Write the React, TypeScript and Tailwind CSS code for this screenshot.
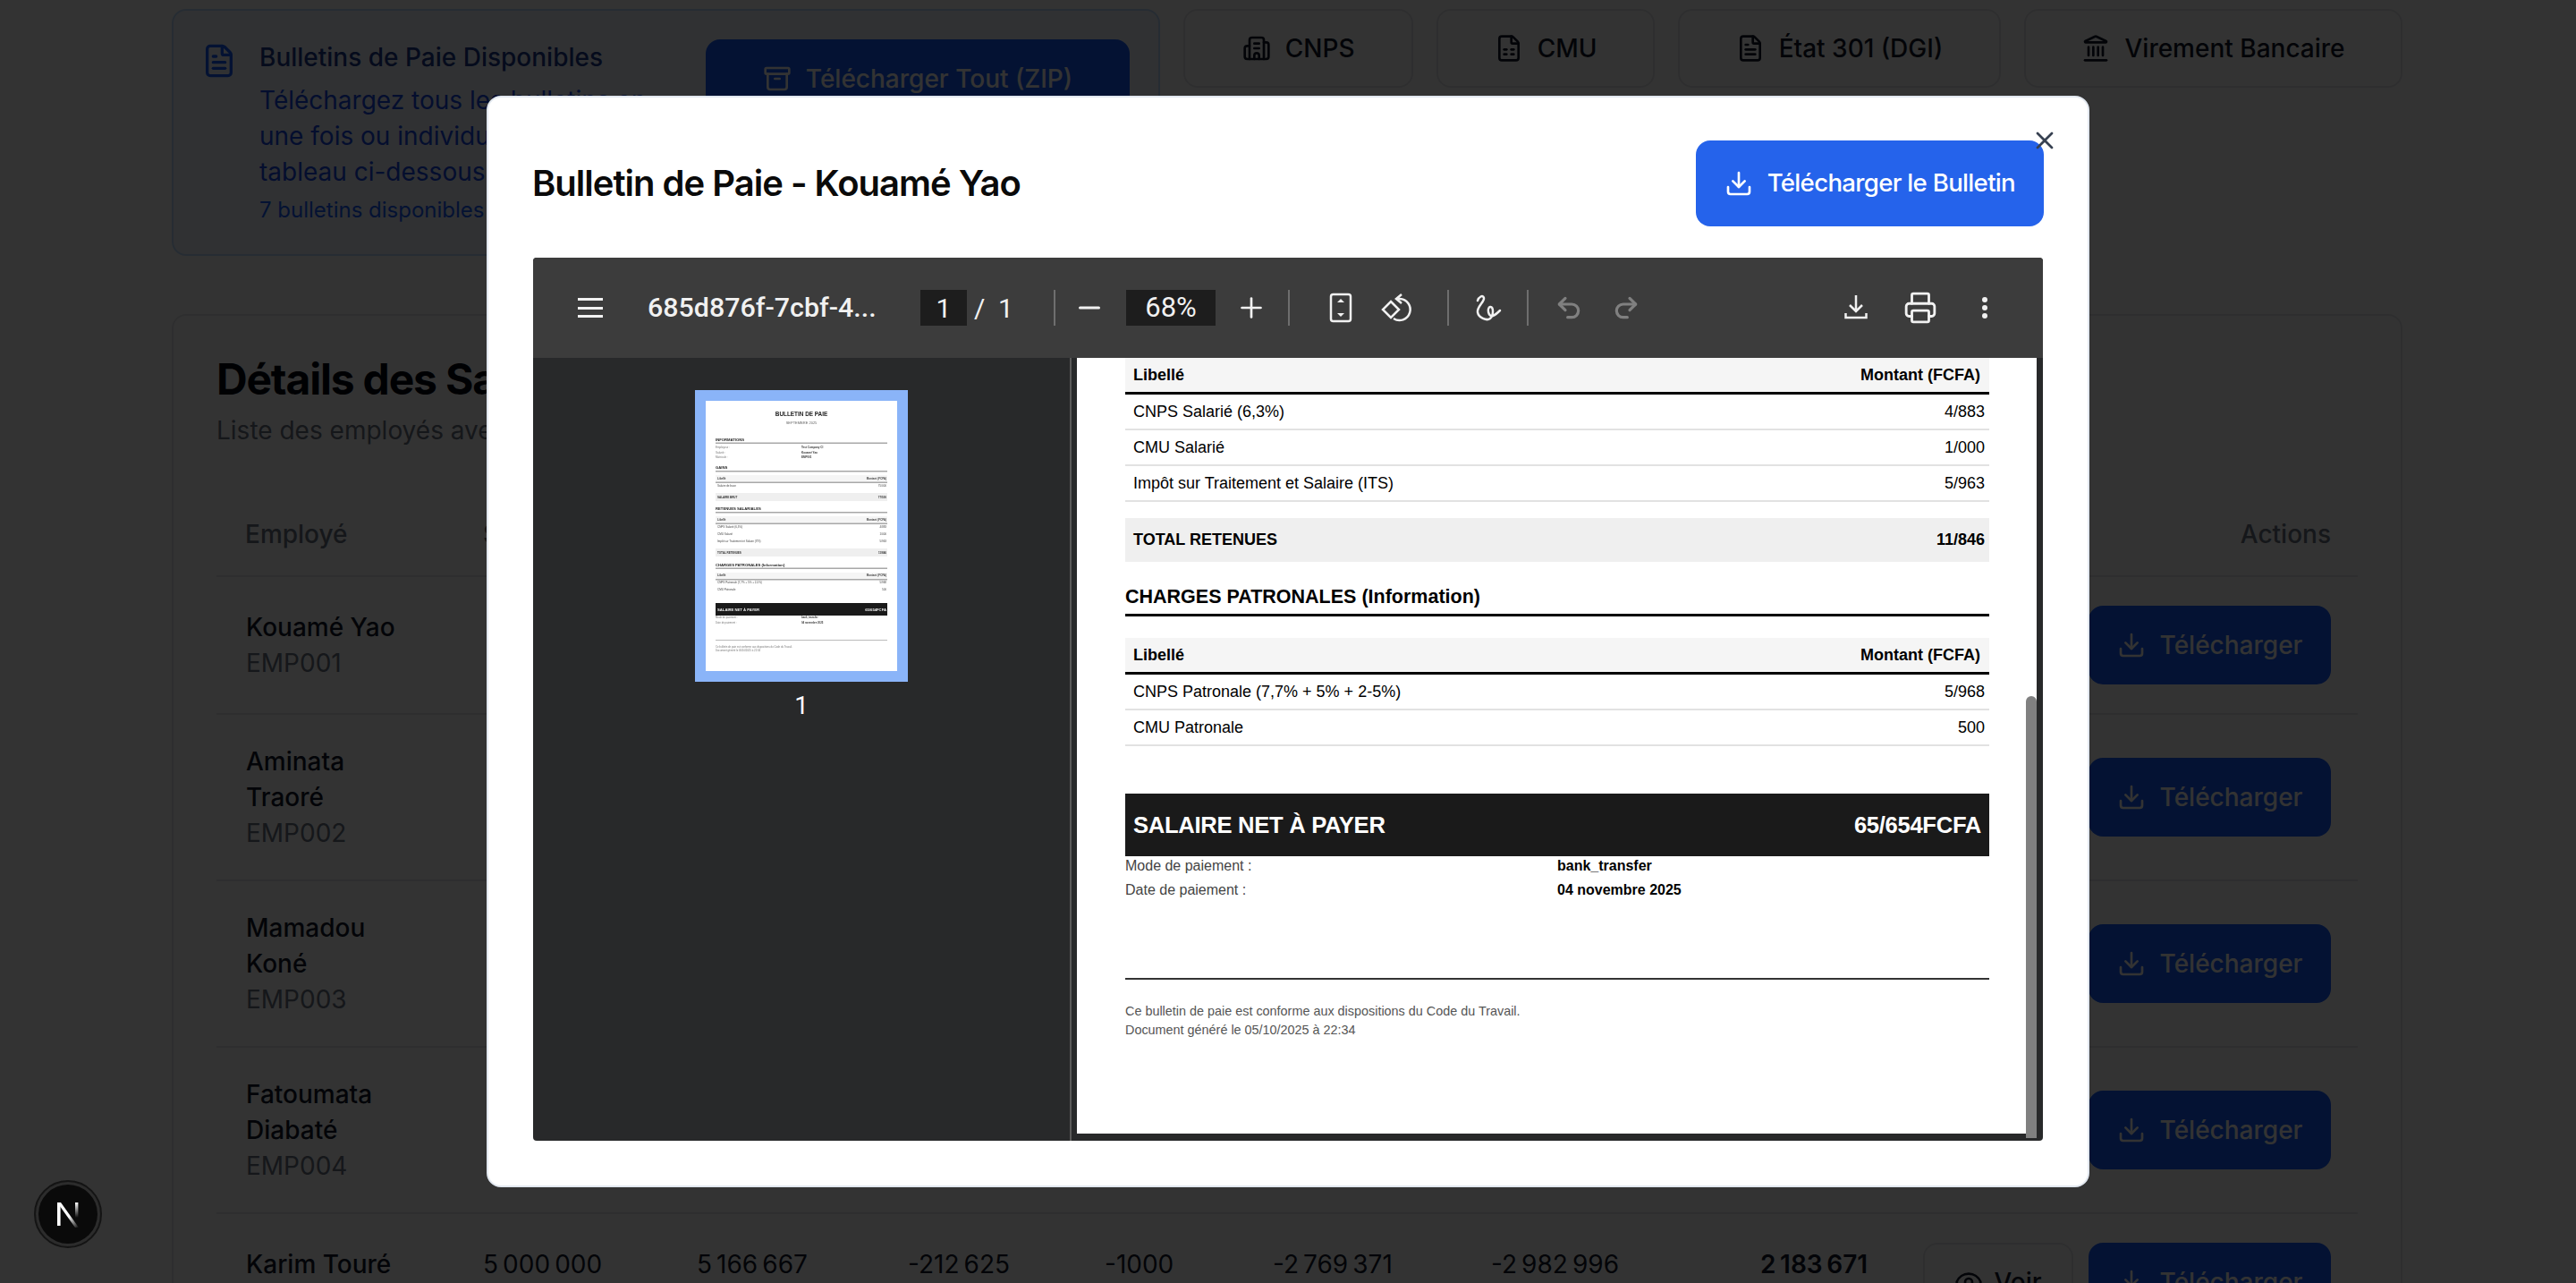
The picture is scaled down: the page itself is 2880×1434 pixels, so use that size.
import React from 'react';
import { Archive, Building2, Download, Eye, FileSpreadsheet, FileText, Landmark, Plus, Minus, Printer, Redo2, Undo2, X } from 'lucide-react';

interface Employee {
  name: string[];
  id: string;
  values: string[];
}

const employees: Employee[] = [
  { name: ['Kouamé Yao'], id: 'EMP001', values: [] },
  { name: ['Aminata', 'Traoré'], id: 'EMP002', values: [] },
  { name: ['Mamadou', 'Koné'], id: 'EMP003', values: [] },
  { name: ['Fatoumata', 'Diabaté'], id: 'EMP004', values: [] },
  { name: ['Karim Touré'], id: 'EMP005', values: ['5\u202f000\u202f000', '5\u202f166\u202f667', '-212\u202f625', '-1000', '-2\u202f769\u202f371', '-2\u202f982\u202f996', '2\u202f183\u202f671'] },
];

const valueCols = ['w-[239px]', 'w-[236px]', 'w-[220px]', 'w-[188px]', 'w-[244px]', 'w-[301px]', 'w-[182px] font-semibold'];

const TopButton = ({ icon, label, className }: { icon: React.ReactNode; label: string; className: string }) => (
  <div className={`flex h-[88px] items-center justify-center gap-[16px] rounded-2xl border-2 border-gray-200 bg-white text-[28px] font-medium text-gray-900 ${className}`}>
    {icon}
    <span>{label}</span>
  </div>
);

const DownloadButton = () => (
  <div className="flex h-[88px] w-[271px] shrink-0 items-center justify-center gap-[16px] rounded-2xl bg-blue-600 text-[28px] font-medium text-white">
    <Download size={32} />
    <span>Télécharger</span>
  </div>
);

const PayRow = ({ label, value, head, shaded }: { label: string; value: string; head?: boolean; shaded?: boolean }) => {
  if (shaded) {
    return (
      <div className="flex h-[49px] items-center justify-between bg-[#efefef] pl-[9px] pr-[5px] text-[18px] font-bold text-black">
        <span>{label}</span>
        <span>{value}</span>
      </div>
    );
  }
  if (head) {
    return (
      <div className="flex h-[41px] items-center justify-between border-b-[3px] border-black bg-[#f5f5f5] pl-[9px] pr-[10px] text-[18px] font-bold text-black">
        <span>{label}</span>
        <span>{value}</span>
      </div>
    );
  }
  return (
    <div className="flex h-[40px] items-center justify-between border-b-2 border-[#e2e2e2] pl-[9px] pr-[5px] text-[18px] text-black">
      <span>{label}</span>
      <span>{value}</span>
    </div>
  );
};

// small preview of the payslip, drawn with real text
const Thumbnail = () => {
  const rows: [number, string, string][] = [
    [87, 'Libellé', 'Montant (FCFA)'],
    [95, 'Salaire de base', '75/000'],
    [133, 'Libellé', 'Montant (FCFA)'],
    [141, 'CNPS Salarié (6,3%)', '4/883'],
    [149, 'CMU Salarié', '1/000'],
    [157, 'Impôt sur Traitement et Salaire (ITS)', '5/963'],
    [195, 'Libellé', 'Montant (FCFA)'],
    [203, 'CNPS Patronale (7,7% + 5% + 2-5%)', '5/968'],
    [211, 'CMU Patronale', '500'],
  ];
  const lines: [number, number][] = [[46.5, 1.5], [78, 1.5], [90.5, 1.5], [124, 1.5], [136.5, 1.5], [186.5, 1.5], [199, 1.5]];
  const bands: [number, number, string][] = [
    [83, 8, '#f5f5f5'],
    [103, 9, '#efefef'],
    [129, 8, '#f5f5f5'],
    [165, 9, '#efefef'],
    [192, 7, '#f5f5f5'],
    [226, 14, '#1a1a1a'],
  ];
  return (
    <svg viewBox="0 0 214 302" className="block h-[302px] w-[214px] bg-white blur-[0.3px]" fontFamily="'Liberation Sans', Arial, sans-serif">
      {bands.map(([y, h, c]) => <rect key={y} x="11" y={y} width="192" height={h} fill={c} />)}
      {lines.map(([y, h]) => <rect key={y} x="11" y={y} width="192" height={h} fill="#a8a8a8" />)}
      <rect x="11" y="267" width="192" height="1" fill="#bbb" />
      <text x="107" y="17" fontSize="6.4" fontWeight="700" textAnchor="middle" fill="#222">BULLETIN DE PAIE</text>
      <text x="107" y="25.5" fontSize="4" textAnchor="middle" fill="#666">SEPTEMBRE 2025</text>
      <g fontSize="4.2" fontWeight="700" fill="#222">
        <text x="11" y="44.5">INFORMATIONS</text>
        <text x="11" y="75.5">GAINS</text>
        <text x="11" y="122">RETENUES SALARIALES</text>
        <text x="11" y="184.5">CHARGES PATRONALES (Information)</text>
      </g>
      <g fontSize="3" fill="#777">
        <text x="11" y="53">Employeur :</text>
        <text x="11" y="58.5">Salarié :</text>
        <text x="11" y="64">Matricule :</text>
      </g>
      <g fontSize="3" fontWeight="700" fill="#333">
        <text x="107" y="53">Test Company CI</text>
        <text x="107" y="58.5">Kouamé Yao</text>
        <text x="107" y="64">EMP001</text>
      </g>
      <g fontSize="3" fill="#444">
        {rows.map(([y, a, b]) => (
          <g key={y} fontWeight={a === 'Libellé' ? 700 : 400}>
            <text x="13" y={y + 1}>{a}</text>
            <text x="202" y={y + 1} textAnchor="end">{b}</text>
          </g>
        ))}
      </g>
      <g fontSize="3" fontWeight="700" fill="#333">
        <text x="13" y="109">SALAIRE BRUT</text>
        <text x="202" y="109" textAnchor="end">77/500</text>
        <text x="13" y="171">TOTAL RETENUES</text>
        <text x="202" y="171" textAnchor="end">11/846</text>
      </g>
      <g fontSize="4.2" fontWeight="700" fill="#eee">
        <text x="13" y="234.5">SALAIRE NET À PAYER</text>
        <text x="202" y="234.5" textAnchor="end">65/654FCFA</text>
      </g>
      <g fontSize="2.8" fill="#777">
        <text x="11" y="243">Mode de paiement :</text>
        <text x="11" y="249">Date de paiement :</text>
        <text x="11" y="276">Ce bulletin de paie est conforme aux dispositions du Code du Travail.</text>
        <text x="11" y="280">Document généré le 05/10/2025 à 22:34</text>
      </g>
      <g fontSize="2.8" fontWeight="700" fill="#333">
        <text x="107" y="243">bank_transfer</text>
        <text x="107" y="249">04 novembre 2025</text>
      </g>
    </svg>
  );
};

const Divider = ({ className }: { className: string }) => <div className={`h-[40px] w-[2px] bg-[#6e6e6e] ${className}`} />;

const Toolbar = () => (
  <div className="flex h-[112px] shrink-0 items-center bg-[#3c3c3c] text-[#f1f1f1]" style={{ fontFamily: 'Roboto, sans-serif' }}>
    <svg width="40" height="40" viewBox="0 0 40 40" className="ml-[44px] shrink-0" fill="#f1f1f1">
      <rect x="6" y="9" width="28" height="3" />
      <rect x="6" y="19" width="28" height="3" />
      <rect x="6" y="28" width="28" height="3" />
    </svg>
    <span className="ml-[44px] w-[305px] whitespace-nowrap text-[30.4px] font-medium">685d876f-7cbf-4...</span>
    <div className="flex h-[40px] w-[52px] items-center justify-center bg-[#1d1d1d] text-[30px]">1</div>
    <span className="ml-[8px] w-[11px] text-[30px]">/</span>
    <span className="ml-[16px] w-[62px] text-[30px]">1</span>
    <Divider className="" />
    <Minus size={36} strokeWidth={2} className="ml-[20px]" />
    <div className="ml-[23px] flex h-[40px] w-[100px] items-center justify-center bg-[#1d1d1d] text-[31px]">68%</div>
    <Plus size={36} strokeWidth={1.8} className="ml-[22px]" />
    <Divider className="ml-[23px]" />
    <svg width="40" height="40" viewBox="0 0 40 40" className="ml-[37px] shrink-0" fill="none" stroke="#f1f1f1" strokeWidth="2.5">
      <rect x="9" y="5" width="22" height="30" rx="2.5" />
      <path d="M20 10l4 4h-8zM20 30l4-4h-8z" fill="#f1f1f1" stroke="none" />
    </svg>
    <svg width="40" height="40" viewBox="0 0 40 40" className="ml-[23px] shrink-0" fill="none" stroke="#f1f1f1" strokeWidth="2.5">
      <path d="M13 13l9 9-9 9-9-9z" />
      <path d="M19 10h4a12 12 0 1 1-7 22M25 5l-6 5 6 5" />
    </svg>
    <Divider className="ml-[36px]" />
    <svg width="40" height="40" viewBox="0 0 40 40" className="ml-[23px] shrink-0" fill="none" stroke="#f1f1f1" strokeWidth="2.5" strokeLinecap="round">
      <path d="M9 12C10 8 15 5 16 9C17 13 8 19 9 25C10 31 19 35 23 32C27 29 27 18 23 19C19 20 21 31 26 29C29 28 32 25 34 23" />
    </svg>
    <Divider className="ml-[24px]" />
    <Undo2 size={32} className="ml-[29px] text-[#808080]" strokeWidth={2.4} />
    <Redo2 size={32} className="ml-[32px] text-[#808080]" strokeWidth={2.4} />
    <svg width="40" height="40" viewBox="0 0 40 40" className="ml-[221px] shrink-0" fill="none" stroke="#f1f1f1" strokeWidth="2.5">
      <path d="M20 6v18M13 17l7 7 7-7M8.5 26v5h23v-5" />
    </svg>
    <Printer size={38} strokeWidth={1.8} className="ml-[33px]" />
    <svg width="40" height="40" viewBox="0 0 40 40" className="ml-[33px] shrink-0" fill="#f1f1f1">
      <circle cx="20" cy="11" r="3" />
      <circle cx="20" cy="20" r="3" />
      <circle cx="20" cy="29" r="3" />
    </svg>
  </div>
);

const PdfPage = () => (
  <div className="h-[867px] flex-1 overflow-hidden bg-white text-black" style={{ fontFamily: "'Liberation Sans', Arial, sans-serif" }}>
    <div className="ml-[54px] w-[966px]">
      <PayRow head label="Libellé" value="Montant (FCFA)" />
      <PayRow label="CNPS Salarié (6,3%)" value="4/883" />
      <PayRow label="CMU Salarié" value="1/000" />
      <PayRow label="Impôt sur Traitement et Salaire (ITS)" value="5/963" />
      <div className="h-[18px]" />
      <PayRow shaded label="TOTAL RETENUES" value="11/846" />
      <h3 className="mt-[25px] h-[36px] border-b-[3px] border-black text-[21.5px] leading-[28px] font-bold">CHARGES PATRONALES (Information)</h3>
      <div className="h-[24px]" />
      <PayRow head label="Libellé" value="Montant (FCFA)" />
      <PayRow label="CNPS Patronale (7,7% + 5% + 2-5%)" value="5/968" />
      <PayRow label="CMU Patronale" value="500" />
      <div className="mt-[53px] flex h-[70px] items-center justify-between bg-[#1a1a1a] px-[9px] text-[25.6px] font-bold tracking-[-0.3px] text-white">
        <span>SALAIRE NET À PAYER</span>
        <span>65/654FCFA</span>
      </div>
      <div className="mt-[-3px] flex h-[27px] items-center text-[16px] text-[#444]">
        <span className="w-[483px]">Mode de paiement :</span>
        <span className="font-bold text-black">bank_transfer</span>
      </div>
      <div className="flex h-[27px] items-center text-[16px] text-[#444]">
        <span className="w-[483px]">Date de paiement :</span>
        <span className="font-bold text-black">04 novembre 2025</span>
      </div>
      <div className="mt-[85px] border-t-2 border-[#333] pt-[25px] text-[14.4px] leading-[21px] text-[#555]">
        <p>Ce bulletin de paie est conforme aux dispositions du Code du Travail.</p>
        <p>Document généré le 05/10/2025 à 22:34</p>
      </div>
    </div>
  </div>
);

const Modal = () => (
  <div className="fixed inset-0 flex items-center justify-center bg-black/80">
    <div className="relative flex h-[1220px] w-[1792px] flex-col rounded-2xl border-2 border-[#e2e8f0] bg-white px-[50px] pb-[50px] pt-[48px]">
      <div className="flex h-[96px] items-center justify-between">
        <h2 className="ml-[-1px] text-[40px] font-semibold tracking-tight text-[#0a0a0a]">Bulletin de Paie - Kouamé Yao</h2>
        <div className="mr-[-1px] flex h-[96px] items-center gap-[16px] rounded-2xl bg-[#2563eb] px-[32px] text-[27.6px] font-medium tracking-tight text-white">
          <Download size={32} />
          <span>Télécharger le Bulletin</span>
        </div>
      </div>
      <div className="relative mt-[35px] flex flex-1 flex-col overflow-hidden rounded-[4px] bg-[#28292a]">
        <Toolbar />
        <div className="flex flex-1">
          <div className="flex w-[602px] shrink-0 flex-col items-center border-r-2 border-[#5a5a5a] pt-[36px]">
            <div className="border-[12px] border-[#8ab4f8]">
              <Thumbnail />
            </div>
            <span className="mt-[6px] text-[28px] text-white" style={{ fontFamily: 'Roboto, sans-serif' }}>1</span>
          </div>
          <div className="flex flex-1 pl-[6px] pr-[7px]">
            <PdfPage />
          </div>
        </div>
        {/* scrollbar of the viewer, floats over the page */}
        <div className="absolute bottom-[3px] right-[7px] h-[494px] w-[12px] rounded-t-md bg-[#808080]" />
      </div>
      <X size={32} className="absolute right-8 top-8 text-[#374151]" />
    </div>
  </div>
);

const NextBadge = () => (
  <div className="fixed bottom-[39px] left-[38px] flex h-[76px] w-[76px] items-center justify-center rounded-full border-2 border-[#141414] bg-[#2c2c2c]">
    <div className="flex h-[66px] w-[66px] items-center justify-center rounded-full bg-[#0a0a0a]">
      <svg width="40" height="40" viewBox="0 0 40 40">
        <defs>
          <linearGradient id="nDiag" x1="0" y1="0" x2="1" y2="1">
            <stop offset="0.55" stopColor="#fff" />
            <stop offset="1" stopColor="#fff" stopOpacity="0" />
          </linearGradient>
          <linearGradient id="nRight" x1="0" y1="0" x2="0" y2="1">
            <stop offset="0" stopColor="#fff" />
            <stop offset="1" stopColor="#fff" stopOpacity="0" />
          </linearGradient>
        </defs>
        <rect x="8" y="7" width="3.6" height="26" fill="#fff" />
        <path d="M8 7h4l20 28h-4z" fill="url(#nDiag)" />
        <rect x="28" y="7" width="3.4" height="17" fill="url(#nRight)" />
      </svg>
    </div>
  </div>
);

export default function App() {
  return (
    <div className="h-screen overflow-hidden bg-white" style={{ fontFamily: 'Inter, sans-serif' }}>
      <div className="ml-[192px] w-[2494px] pt-[10px]">
        <div className="flex items-start gap-[26px]">
          <div className="flex h-[276px] w-[1105px] shrink-0 justify-between rounded-2xl border-2 border-blue-200 bg-blue-50 pl-[31px] pr-[32px] pt-[32px]">
            <div className="flex gap-[25px]">
              <FileText size={40} className="mt-[4px] shrink-0 text-blue-600" />
              <div className="w-[470px] whitespace-nowrap">
                <p className="text-[28px] font-medium leading-[40px] text-blue-900">Bulletins de Paie Disponibles</p>
                <p className="mt-[8px] text-[28px] leading-[40px] text-blue-700">
                  Téléchargez tous les bulletins en<br />
                  une fois ou individuellement depuis le<br />
                  tableau ci-dessous.
                </p>
                <p className="mt-[5px] text-[24px] leading-[36px] text-blue-600">7 bulletins disponibles</p>
              </div>
            </div>
            <div className="flex h-[88px] w-[474px] items-center justify-center gap-[16px] rounded-2xl bg-blue-600 text-[28px] font-medium text-white">
              <Archive size={32} />
              <span>Télécharger Tout (ZIP)</span>
            </div>
          </div>
          <TopButton className="w-[258px]" label="CNPS" icon={<Building2 size={32} />} />
          <TopButton className="w-[244px]" label="CMU" icon={<FileSpreadsheet size={32} />} />
          <TopButton className="w-[362px]" label="État 301 (DGI)" icon={<FileText size={32} />} />
          <TopButton className="w-[424px]" label="Virement Bancaire" icon={<Landmark size={32} />} />
        </div>

        <div className="mt-[65px] rounded-2xl border-2 border-gray-200 bg-white px-[48px] pt-[43px]">
          <h2 className="text-[48px] font-bold leading-[56px] tracking-tight text-gray-950">Détails des Salaires</h2>
          <p className="mt-[9px] text-[28px] leading-[40px] text-gray-500">Liste des employés avec leurs salaires</p>
          <div className="mt-[50px] flex h-[94px] items-center border-b-2 border-gray-200 text-[28px] font-medium text-gray-500">
            <span className="w-[298px] pl-[32px]">Employé</span>
            <span className="w-[1850px]">Salaire</span>
            <span className="flex-1 pr-[30px] text-right">Actions</span>
          </div>
          {employees.map((emp) => (
            <div key={emp.name.join()} className="flex items-center border-b-2 border-gray-200 py-[32px] text-[28px]">
              <div className="w-[298px] shrink-0 pl-[33px] leading-[40px]">
                {emp.name.map((line) => <p key={line} className="font-medium text-gray-900">{line}</p>)}
                <p className="text-gray-500">{emp.id}</p>
              </div>
              <div className="mt-[4px] flex w-[1610px] shrink-0 self-start leading-[40px] text-gray-900">
                {emp.values.map((v, i) => <span key={v} className={`shrink-0 ${valueCols[i]}`}>{v}</span>)}
              </div>
              <div className="flex flex-1 items-start justify-end gap-[17px] pr-[30px]">
                {emp.values.length > 0 && (
                  <div className="flex h-[88px] w-[168px] shrink-0 items-center justify-center gap-[12px] rounded-2xl border-2 border-gray-200 font-medium text-gray-900">
                    <Eye size={32} />
                    <span>Voir</span>
                  </div>
                )}
                <DownloadButton />
              </div>
            </div>
          ))}
        </div>
      </div>
      <Modal />
      <NextBadge />
    </div>
  );
}
